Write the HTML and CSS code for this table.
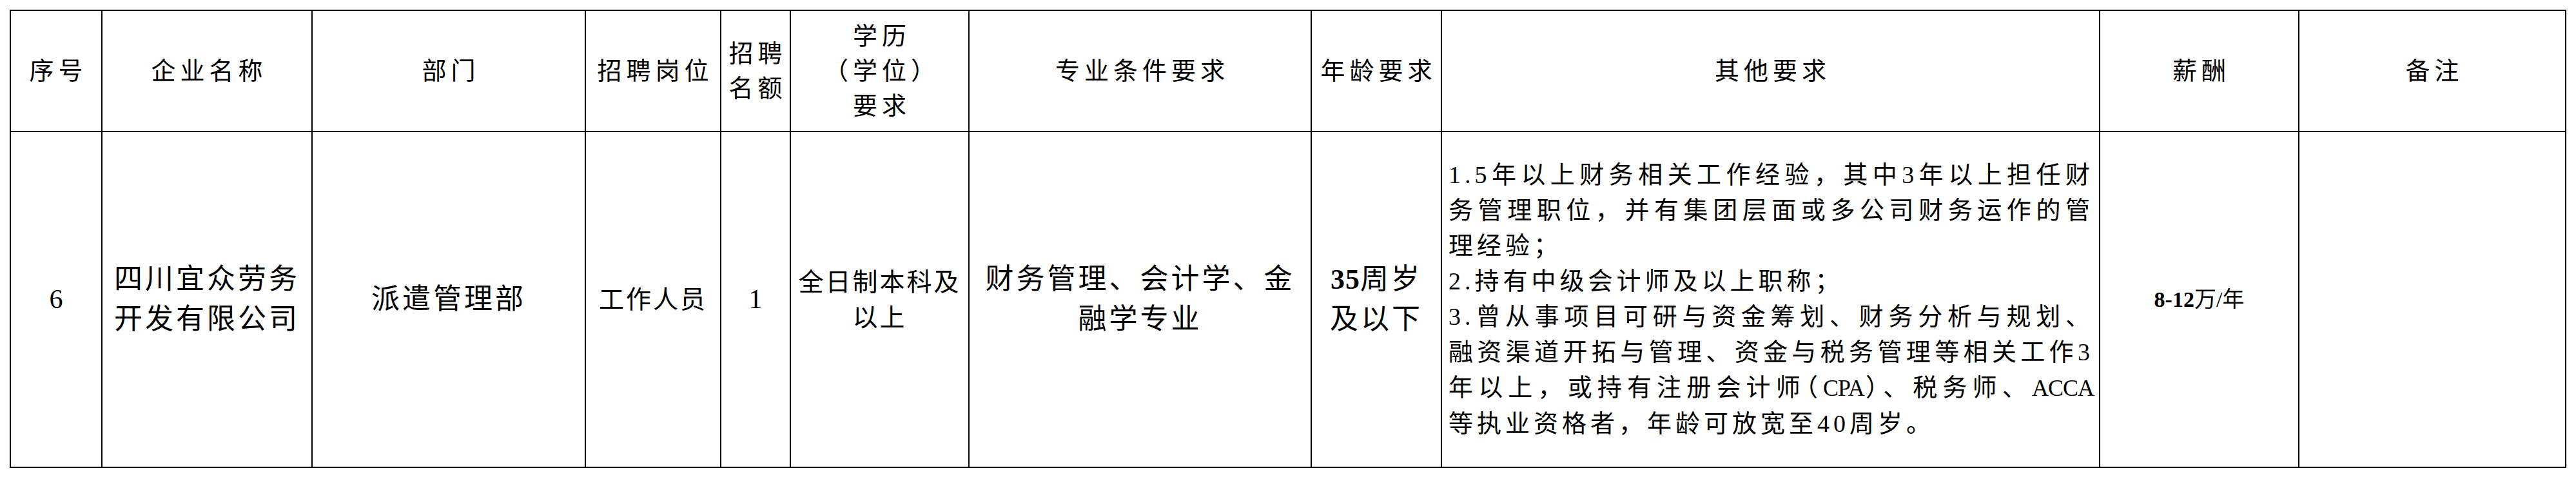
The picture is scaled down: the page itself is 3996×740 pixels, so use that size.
FILE: index.html
```html
<!DOCTYPE html>
<html lang="zh-CN">
<head>
<meta charset="utf-8">
<title>招聘岗位表</title>
<link rel="stylesheet" href="styles.css">
</head>
<body>
<table class="grid">
  <colgroup>
    <col class="c-no">
    <col class="c-co">
    <col class="c-dept">
    <col class="c-pos">
    <col class="c-cnt">
    <col class="c-edu">
    <col class="c-major">
    <col class="c-age">
    <col class="c-req">
    <col class="c-pay">
    <col class="c-note">
  </colgroup>
  <thead>
    <tr class="head">
      <th>序号</th>
      <th>企业名称</th>
      <th>部门</th>
      <th>招聘岗位</th>
      <th>招聘<br>名额</th>
      <th>学历<br><span class="halt">（学位）</span><br>要求</th>
      <th>专业条件要求</th>
      <th>年龄要求</th>
      <th>其他要求</th>
      <th>薪酬</th>
      <th>备注</th>
    </tr>
  </thead>
  <tbody>
    <tr class="row">
      <td class="num">6</td>
      <td class="lg">四川宜众劳务<br>开发有限公司</td>
      <td class="lg">派遣管理部</td>
      <td class="md">工作人员</td>
      <td class="num">1</td>
      <td class="md">全日制本科及<br>以上</td>
      <td class="lg">财务管理、会计学、金<br>融学专业</td>
      <td class="lg age"><span class="digits">35</span>周岁<br>及以下</td>
      <td class="req">
        <span class="line full">1.5年以上财务相关工作经验，其中3年以上担任财</span>
        <span class="line full">务管理职位，并有集团层面或多公司财务运作的管</span>
        <span class="line">理经验；</span>
        <span class="line">2.持有中级会计师及以上职称；</span>
        <span class="line full">3.曾从事项目可研与资金筹划、财务分析与规划、</span>
        <span class="line full">融资渠道开拓与管理、资金与税务管理等相关工作3</span>
        <span class="line full">年以上，或持有注册会计师<span class="halt">（</span><span class="lat">CPA</span><span class="halt">）</span>、税务师、<span class="lat">ACCA</span></span>
        <span class="line">等执业资格者，年龄可放宽至40周岁。</span>
      </td>
      <td class="pay"><span class="digits">8-12</span>万/年</td>
      <td class="note"></td>
    </tr>
  </tbody>
</table>
</body>
</html>
```

FILE: styles.css
```css
html, body {
  margin: 0;
  background: #ffffff;
}

body {
  padding: 15px 0 0 15px;
  color: #000000;
  font-family: "Liberation Serif", "Noto Sans CJK SC", serif;
}

.grid {
  border-collapse: collapse;
  table-layout: fixed;
  width: 3965px;
}

.c-no { width: 142px; }
.c-co { width: 326px; }
.c-dept { width: 424px; }
.c-pos { width: 210px; }
.c-cnt { width: 108px; }
.c-edu { width: 277px; }
.c-major { width: 531px; }
.c-age { width: 202px; }
.c-req { width: 1021px; }
.c-pay { width: 309px; }
.c-note { width: 414px; }

.grid th,
.grid td {
  border: 2px solid #000000;
  padding: 0;
  text-align: center;
  vertical-align: middle;
}

.head {
  height: 188px;
}

.head th {
  font-weight: 400;
  font-size: 38px;
  line-height: 54px;
  letter-spacing: 7px;
  padding-left: 7px;
}

.halt {
  font-feature-settings: "halt" 1;
}

.row {
  height: 521px;
}

.num {
  font-size: 42px;
  line-height: 55px;
}

.lg {
  font-size: 44px;
  line-height: 62px;
  letter-spacing: 4px;
  padding-left: 4px;
}

.md {
  font-size: 39px;
  line-height: 55px;
  letter-spacing: 3px;
  padding-left: 3px;
}

.age .digits {
  letter-spacing: 1px;
  font-weight: 700;
}

.grid .req {
  text-align: left;
  padding: 0 8px 0 10px;
  font-size: 38px;
  line-height: 55px;
  letter-spacing: 6px;
}

.line {
  display: block;
  white-space: nowrap;
}

.line.full {
  text-align: justify;
  text-align-last: justify;
}

.lat {
  font-size: 36px;
  letter-spacing: -1px;
}

.pay {
  font-size: 34px;
  line-height: 44px;
}

.pay .digits {
  font-weight: 700;
}
```
